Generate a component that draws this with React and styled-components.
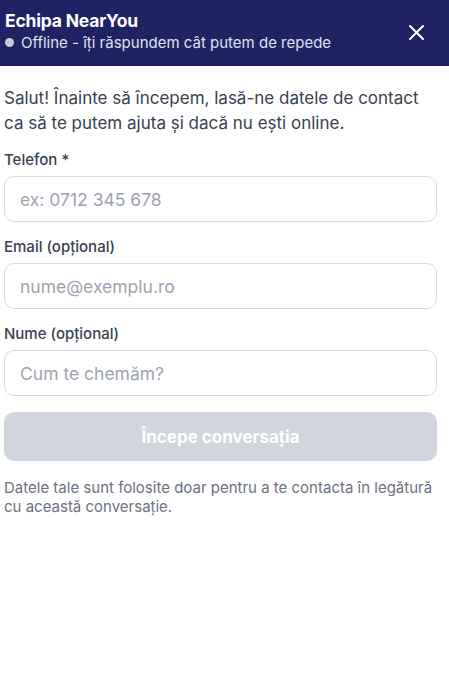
import styled, { createGlobalStyle } from 'styled-components';

const Global = createGlobalStyle`
  body {
    margin: 0;
    background: #fff;
    font-family: Inter, "Noto Sans", sans-serif;
  }
`;

const Widget = styled.div`
  width: 449px;
  height: 686px;
  display: flex;
  flex-direction: column;
  background: #fff;
`;

const Header = styled.header`
  height: 66px;
  box-sizing: border-box;
  background: #1f2263;
  color: #fff;
  display: flex;
  align-items: center;
  justify-content: space-between;
  padding: 0 24px 4px 5px;
`;

const Titles = styled.div`
  display: flex;
  flex-direction: column;
  gap: 2px;
`;

const Title = styled.div`
  font-size: 17.5px;
  font-weight: 700;
  letter-spacing: -0.2px;
`;

const Status = styled.div`
  display: flex;
  align-items: center;
  gap: 7px;
  font-size: 15px;
  color: #dfe1f0;
`;

const Dot = styled.span`
  width: 9px;
  height: 9px;
  border-radius: 50%;
  background: #c9cbd3;
`;

const CloseButton = styled.button`
  border: none;
  background: none;
  padding: 0;
  color: #fff;
  cursor: pointer;
  display: flex;
  margin-top: 2px;
`;

const Body = styled.div`
  padding: 20px 12px 0 4px;
  display: flex;
  flex-direction: column;
`;

const Intro = styled.p`
  margin: 0 0 15px;
  font-size: 17px;
  line-height: 25px;
  color: #374151;
`;

const Field = styled.div`
  display: flex;
  flex-direction: column;
  gap: 7px;
  margin-bottom: 16px;
`;

const Label = styled.label`
  font-size: 15px;
  font-weight: 500;
  color: #374151;
  line-height: 18px;
`;

const Input = styled.input`
  height: 46px;
  box-sizing: border-box;
  border: 1px solid #d8dbe0;
  border-radius: 10px;
  padding: 0 15px;
  font-family: inherit;
  font-size: 17.5px;
  color: #111827;
  outline: none;
  &::placeholder {
    color: #9ca3af;
  }
`;

const Submit = styled.button`
  height: 49px;
  border: none;
  border-radius: 10px;
  background: #d1d5dd;
  color: #fff;
  font-family: inherit;
  font-size: 17px;
  font-weight: 700;
  cursor: not-allowed;
`;

const Note = styled.p`
  margin: 17px 0 0;
  font-size: 15px;
  line-height: 19px;
  color: #6b7280;
`;

const fields = [
  { label: 'Telefon *', placeholder: 'ex: 0712 345 678', type: 'tel' },
  { label: 'Email (opțional)', placeholder: 'nume@exemplu.ro', type: 'email' },
  { label: 'Nume (opțional)', placeholder: 'Cum te chemăm?', type: 'text' },
];

export default function App() {
  return (
    <>
      <Global />
      <Widget>
        <Header>
          <Titles>
            <Title>Echipa NearYou</Title>
            <Status>
              <Dot />
              Offline - îți răspundem cât putem de repede
            </Status>
          </Titles>
          <CloseButton aria-label="Închide">
            <svg width="17" height="17" viewBox="0 0 17 17" fill="none" stroke="currentColor" strokeWidth="2" strokeLinecap="round">
              <path d="M2 2l13 13M15 2L2 15" />
            </svg>
          </CloseButton>
        </Header>
        <Body>
          <Intro>
            Salut! Înainte să începem, lasă-ne datele de contact ca să te putem ajuta și dacă nu ești online.
          </Intro>
          {fields.map((f) => (
            <Field key={f.label}>
              <Label>{f.label}</Label>
              <Input type={f.type} placeholder={f.placeholder} />
            </Field>
          ))}
          <Submit disabled>Începe conversația</Submit>
          <Note>
            Datele tale sunt folosite doar pentru a te contacta în legătură cu această conversație.
          </Note>
        </Body>
      </Widget>
    </>
  );
}
